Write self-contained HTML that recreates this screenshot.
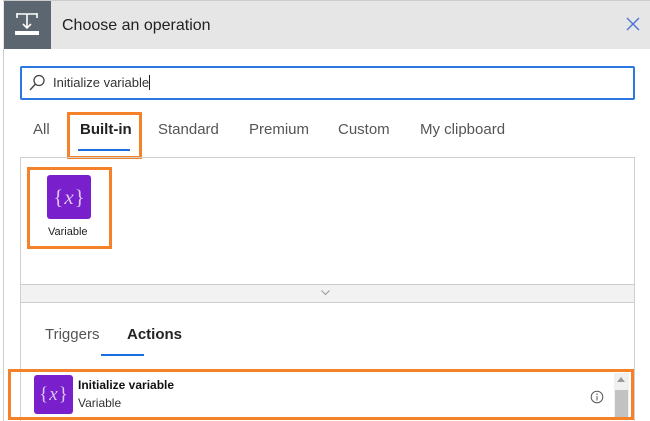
<!DOCTYPE html>
<html><head><style>
*{margin:0;padding:0;box-sizing:border-box}
body{width:650px;height:421px;background:#fff;position:relative;overflow:hidden;font-family:"Liberation Sans",sans-serif;color:#333}
.a{position:absolute}
.ico{background:#7a1fcc;border-radius:3px;color:#dcc8f4;font-family:"Liberation Serif",serif;display:flex;align-items:center;justify-content:center}
.ico i{font-style:italic;margin:0 1px}
.tab{position:absolute;font-size:15px;color:#555}
</style></head><body>
<div class="a" style="left:3px;top:0;width:1px;height:421px;background:#ccc"></div>
<div class="a" style="left:3px;top:0;width:647px;height:49px;background:#e6e6e6"></div>
<div class="a" style="left:3px;top:0;width:647px;height:1px;background:#ccc"></div>
<div class="a" style="left:4px;top:1px;width:47px;height:48px;background:#5b6670"></div>
<svg class="a" style="left:14px;top:12px" width="26" height="24" viewBox="0 0 26 24"><g stroke="#fff" stroke-width="1.6" fill="none"><path d="M3 2h20M3 1v5M23 1v5M13 2v14M9 12l4 4 4-4"/></g><rect x="1" y="19" width="24" height="4" fill="#fff"/></svg>
<div class="a" style="left:62px;top:17px;font-size:16px;color:#222">Choose an operation</div>
<svg class="a" style="left:626px;top:17px" width="14" height="14"><path d="M1 1L13 13M13 1L1 13" stroke="#4a74d8" stroke-width="1.4"/></svg>
<div class="a" style="left:20px;top:66px;width:615px;height:34px;border:2px solid #2a78e0;border-radius:2px"></div>
<svg class="a" style="left:29px;top:74px" width="16" height="17"><circle cx="10" cy="6.5" r="5" stroke="#444" stroke-width="1.3" fill="none"/><path d="M6.5 10L1 16" stroke="#444" stroke-width="1.4"/></svg>
<div class="a" style="left:53px;top:75px;font-size:13px;color:#333">Initialize variable<span style="display:inline-block;width:1px;height:15px;background:#222;vertical-align:-3px"></span></div>
<div class="tab" style="left:33px;top:121px">All</div>
<div class="tab" style="left:80px;top:121px;color:#222;font-weight:bold">Built-in</div>
<div class="a" style="left:78px;top:149px;width:52px;height:2px;background:#1a6fe0"></div>
<div class="a" style="left:67px;top:112px;width:75px;height:47px;border:3px solid #f5822a"></div>
<div class="tab" style="left:158px;top:121px">Standard</div>
<div class="tab" style="left:249px;top:121px">Premium</div>
<div class="tab" style="left:338px;top:121px">Custom</div>
<div class="tab" style="left:420px;top:121px">My clipboard</div>
<div class="a" style="left:20px;top:157px;width:615px;height:264px;border:1px solid #d0d0d0;border-bottom:none"></div>
<div class="a" style="left:27px;top:167px;width:85px;height:82px;border:3px solid #f5822a"></div>
<div class="a ico" style="left:47px;top:175px;width:44px;height:44px;font-size:21px">{<i>x</i>}</div>
<div class="a" style="left:48px;top:226px;font-size:11px;color:#222">Variable</div>
<div class="a" style="left:21px;top:284px;width:613px;height:19px;background:#f2f2f2;border-top:1px solid #ccc;border-bottom:1px solid #ccc"></div>
<svg class="a" style="left:321px;top:290px" width="9" height="6"><path d="M0.5 0.5L4.5 4.5 8.5 0.5" stroke="#999" fill="none"/></svg>
<div class="tab" style="left:45px;top:326px">Triggers</div>
<div class="tab" style="left:127px;top:326px;color:#222;font-weight:bold">Actions</div>
<div class="a" style="left:101px;top:354px;width:43px;height:2px;background:#1a6fe0"></div>
<div class="a" style="left:8px;top:369px;width:626px;height:51px;border:3px solid #f5822a"></div>
<div class="a" style="left:614px;top:373px;width:15px;height:44px;background:#f0f0f0"></div>
<div class="a" style="left:615px;top:390px;width:13px;height:27px;background:#c2c2c2"></div>
<svg class="a" style="left:617px;top:377px" width="8" height="5"><path d="M0 5L4 0 8 5z" fill="#999"/></svg>
<div class="a ico" style="left:34px;top:375px;width:39px;height:39px;font-size:19px">{<i>x</i>}</div>
<div class="a" style="left:78px;top:378px;font-size:12px;color:#111;font-weight:bold">Initialize variable</div>
<div class="a" style="left:78px;top:396px;font-size:12px;color:#333">Variable</div>
<svg class="a" style="left:590px;top:390px" width="14" height="14"><circle cx="7" cy="7" r="5.8" stroke="#555" fill="none"/><path d="M7 6v4.5" stroke="#555"/><circle cx="7" cy="4.2" r=".7" fill="#555"/></svg>
</body></html>
